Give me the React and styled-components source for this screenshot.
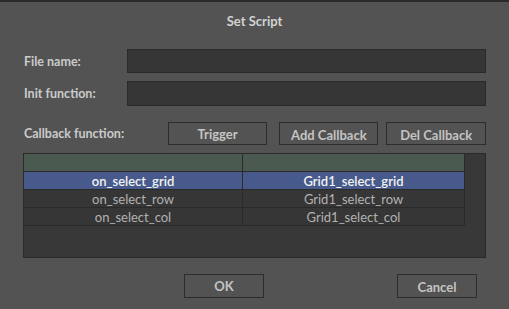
import React from "react";
import styled, { createGlobalStyle } from "styled-components";

const Global = createGlobalStyle`
  html, body {
    margin: 0;
    padding: 0;
    background: #535353;
  }
  * {
    box-sizing: border-box;
  }
`;

const Frame = styled.div`
  width: 509px;
  height: 309px;
  background: #535353;
  border-top: 2px solid #2b2b2b;
  font-family: Lato, "Noto Sans", sans-serif;
  color: #cbcbcb;
  display: flex;
  flex-direction: column;
  padding: 0 23px 0 23px;
`;

const Title = styled.div`
  height: 36px;
  display: flex;
  align-items: center;
  justify-content: center;
  padding-top: 1px;
  font-size: 13px;
  font-weight: 700;
  color: #d2d2d2;
`;

const FieldRow = styled.div`
  display: flex;
  align-items: center;
  margin-top: ${props => props.top}px;
`;

const Label = styled.div`
  width: ${props => props.width}px;
  padding-left: 1px;
  font-size: 12.5px;
  font-weight: 700;
  color: #cbcbcb;
`;

const Input = styled.div`
  width: 359px;
  height: ${props => props.h || 24}px;
  background: #363636;
  border: 1px solid #2a2a2a;
`;

const Button = styled.div`
  width: ${props => props.width || 100}px;
  height: ${props => props.h || 23}px;
  margin-left: ${props => props.gap || 0}px;
  border: 1px solid #2c2c2c;
  background: #535353;
  display: flex;
  align-items: center;
  justify-content: center;
  font-size: 13px;
  font-weight: 700;
  color: #c4c4c4;
  padding-top: ${props => props.pt || 0}px;
`;

const Table = styled.div`
  margin-top: 8px;
  width: 463px;
  height: 105px;
  background: #383838;
  border: 1px solid #2a2a2a;
  display: flex;
`;

const Grid = styled.div`
  width: 441px;
  display: grid;
  grid-template-columns: 219px 221px;
  grid-auto-rows: min-content;
  align-content: start;
  border-right: 1px solid #2a2a2a;
  border-bottom: 1px solid #2a2a2a;
  height: 72px;
`;

const Cell = styled.div`
  height: ${props => props.h || 18}px;
  display: flex;
  align-items: center;
  justify-content: center;
  font-size: 13px;
  font-weight: ${props => (props.selected ? 600 : 400)};
  color: ${props => (props.selected ? "#f2f2f2" : "#b2b2b2")};
  background: ${props =>
    props.header ? "#4b5a50" : props.selected ? "#475a8b" : "#363636"};
  border-bottom: 1px solid #2a2a2a;
  border-right: ${props => (props.last ? "none" : "1px solid #2a2a2a")};
`;

const Footer = styled.div`
  display: flex;
  margin-top: 16px;
  padding-left: 161px;
`;

const rows = [
  ["on_select_grid", "Grid1_select_grid", true],
  ["on_select_row", "Grid1_select_row", false],
  ["on_select_col", "Grid1_select_col", false],
];

export default function App() {
  return (
    <>
      <Global />
      <Frame>
        <Title>Set Script</Title>
        <FieldRow top={11}>
          <Label width={104}>File name:</Label>
          <Input />
        </FieldRow>
        <FieldRow top={8}>
          <Label width={104}>Init function:</Label>
          <Input h={25} />
        </FieldRow>
        <FieldRow top={16}>
          <Label width={145}>Callback function:</Label>
          <Button width={100}>Trigger</Button>
          <Button width={99} gap={12} pt={2}>
            Add Callback
          </Button>
          <Button width={100} gap={8} pt={2}>
            Del Callback
          </Button>
        </FieldRow>
        <Table>
          <Grid>
            <Cell header />
            <Cell header last />
            {rows.map(([a, b, sel]) => (
              <React.Fragment key={a}>
                <Cell selected={sel}>{a}</Cell>
                <Cell selected={sel} last>
                  {b}
                </Cell>
              </React.Fragment>
            ))}
          </Grid>
        </Table>
        <Footer>
          <Button width={80} h={24}>
            OK
          </Button>
          <Button width={80} h={24} gap={133} pt={2}>
            Cancel
          </Button>
        </Footer>
      </Frame>
    </>
  );
}
